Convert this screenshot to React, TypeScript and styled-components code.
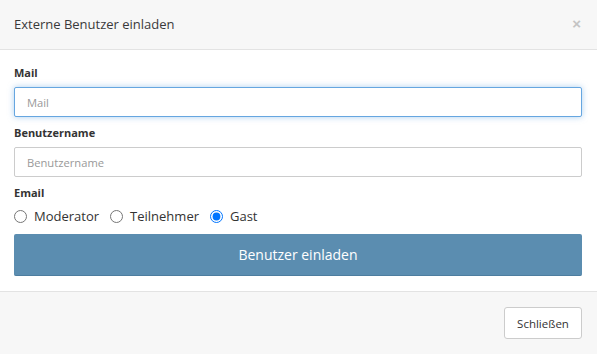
import React from "react";
import styled, { createGlobalStyle } from "styled-components";

const Global = createGlobalStyle`
  html, body { margin: 0; padding: 0; background: #fff; }
  body { font-family: "Open Sans", "Noto Sans", sans-serif; color: #333; }
  * { box-sizing: border-box; }
`;

const Modal = styled.div`
  width: 597px;
  height: 354px;
  display: flex;
  flex-direction: column;
  background: #fff;
`;

const Header = styled.div`
  height: 50px;
  flex: none;
  display: flex;
  align-items: center;
  justify-content: space-between;
  padding: 0 14px 2px 14px;
  background: #f7f7f7;
  border-bottom: 1px solid #e3e3e3;
`;

const Title = styled.h4`
  margin: 0;
  font-size: 13px;
  font-weight: 400;
  color: #3a3a3a;
`;

const Close = styled.button`
  border: 0;
  background: none;
  padding: 0;
  margin-right: 2px;
  font-size: 15px;
  font-weight: 700;
  line-height: 1;
  color: #c4c4c4;
  cursor: pointer;
  font-family: "Liberation Sans", sans-serif;
`;

const Body = styled.div`
  flex: none;
  padding: 14px 15px 15px 14px;
  display: flex;
  flex-direction: column;
`;

const Label = styled.label<{ $gap?: number }>`
  display: block;
  font-size: 11px;
  font-weight: 700;
  line-height: 18px;
  color: #333;
  margin-top: ${(p) => p.$gap ?? 0}px;
  margin-bottom: 5px;
`;

const Input = styled.input<{ $focus?: boolean }>`
  display: block;
  width: 100%;
  height: 30px;
  padding: 0 12px;
  font-family: inherit;
  font-size: 11.2px;
  color: #333;
  border-radius: 2px;
  outline: none;
  border: 1px solid ${(p) => (p.$focus ? "#66a6e0" : "#ccc")};
  box-shadow: ${(p) =>
    p.$focus ? "0 0 6px rgba(102,166,224,0.55)" : "none"};
  &::placeholder { color: #999; }
`;

const RadioRow = styled.div`
  display: flex;
  align-items: center;
  height: 18px;
  gap: 11px;
`;

const RadioLabel = styled.label`
  display: flex;
  align-items: center;
  gap: 7px;
  font-size: 13px;
  color: #333;
`;

const Radio = styled.input`
  width: 13px;
  height: 13px;
  margin: 0;
`;

const Primary = styled.button`
  margin-top: 9px;
  height: 42px;
  width: 100%;
  border: 0;
  border-bottom: 1px solid #4d7d9f;
  border-radius: 2px;
  background: #5b8db0;
  color: #fff;
  font-family: inherit;
  font-size: 14px;
  cursor: pointer;
`;

const Footer = styled.div`
  flex: 1;
  display: flex;
  justify-content: flex-end;
  align-items: flex-start;
  padding: 15px 15px 0 0;
  background: #f7f7f7;
  border-top: 1px solid #e3e3e3;
`;

const Secondary = styled.button`
  height: 32px;
  width: 78px;
  border: 1px solid #ccc;
  border-radius: 3px;
  background: #fff;
  color: #333;
  font-family: inherit;
  font-size: 11.5px;
  cursor: pointer;
`;

export default function App() {
  return (
    <>
      <Global />
      <Modal>
        <Header>
          <Title>Externe Benutzer einladen</Title>
          <Close aria-label="close">×</Close>
        </Header>
        <Body>
          <Label>Mail</Label>
          <Input $focus placeholder="Mail" />
          <Label $gap={7}>Benutzername</Label>
          <Input placeholder="Benutzername" />
          <Label $gap={7}>Email</Label>
          <RadioRow>
            <RadioLabel>
              <Radio type="radio" name="role" /> Moderator
            </RadioLabel>
            <RadioLabel>
              <Radio type="radio" name="role" /> Teilnehmer
            </RadioLabel>
            <RadioLabel>
              <Radio type="radio" name="role" defaultChecked /> Gast
            </RadioLabel>
          </RadioRow>
          <Primary>Benutzer einladen</Primary>
        </Body>
        <Footer>
          <Secondary>Schließen</Secondary>
        </Footer>
      </Modal>
    </>
  );
}
